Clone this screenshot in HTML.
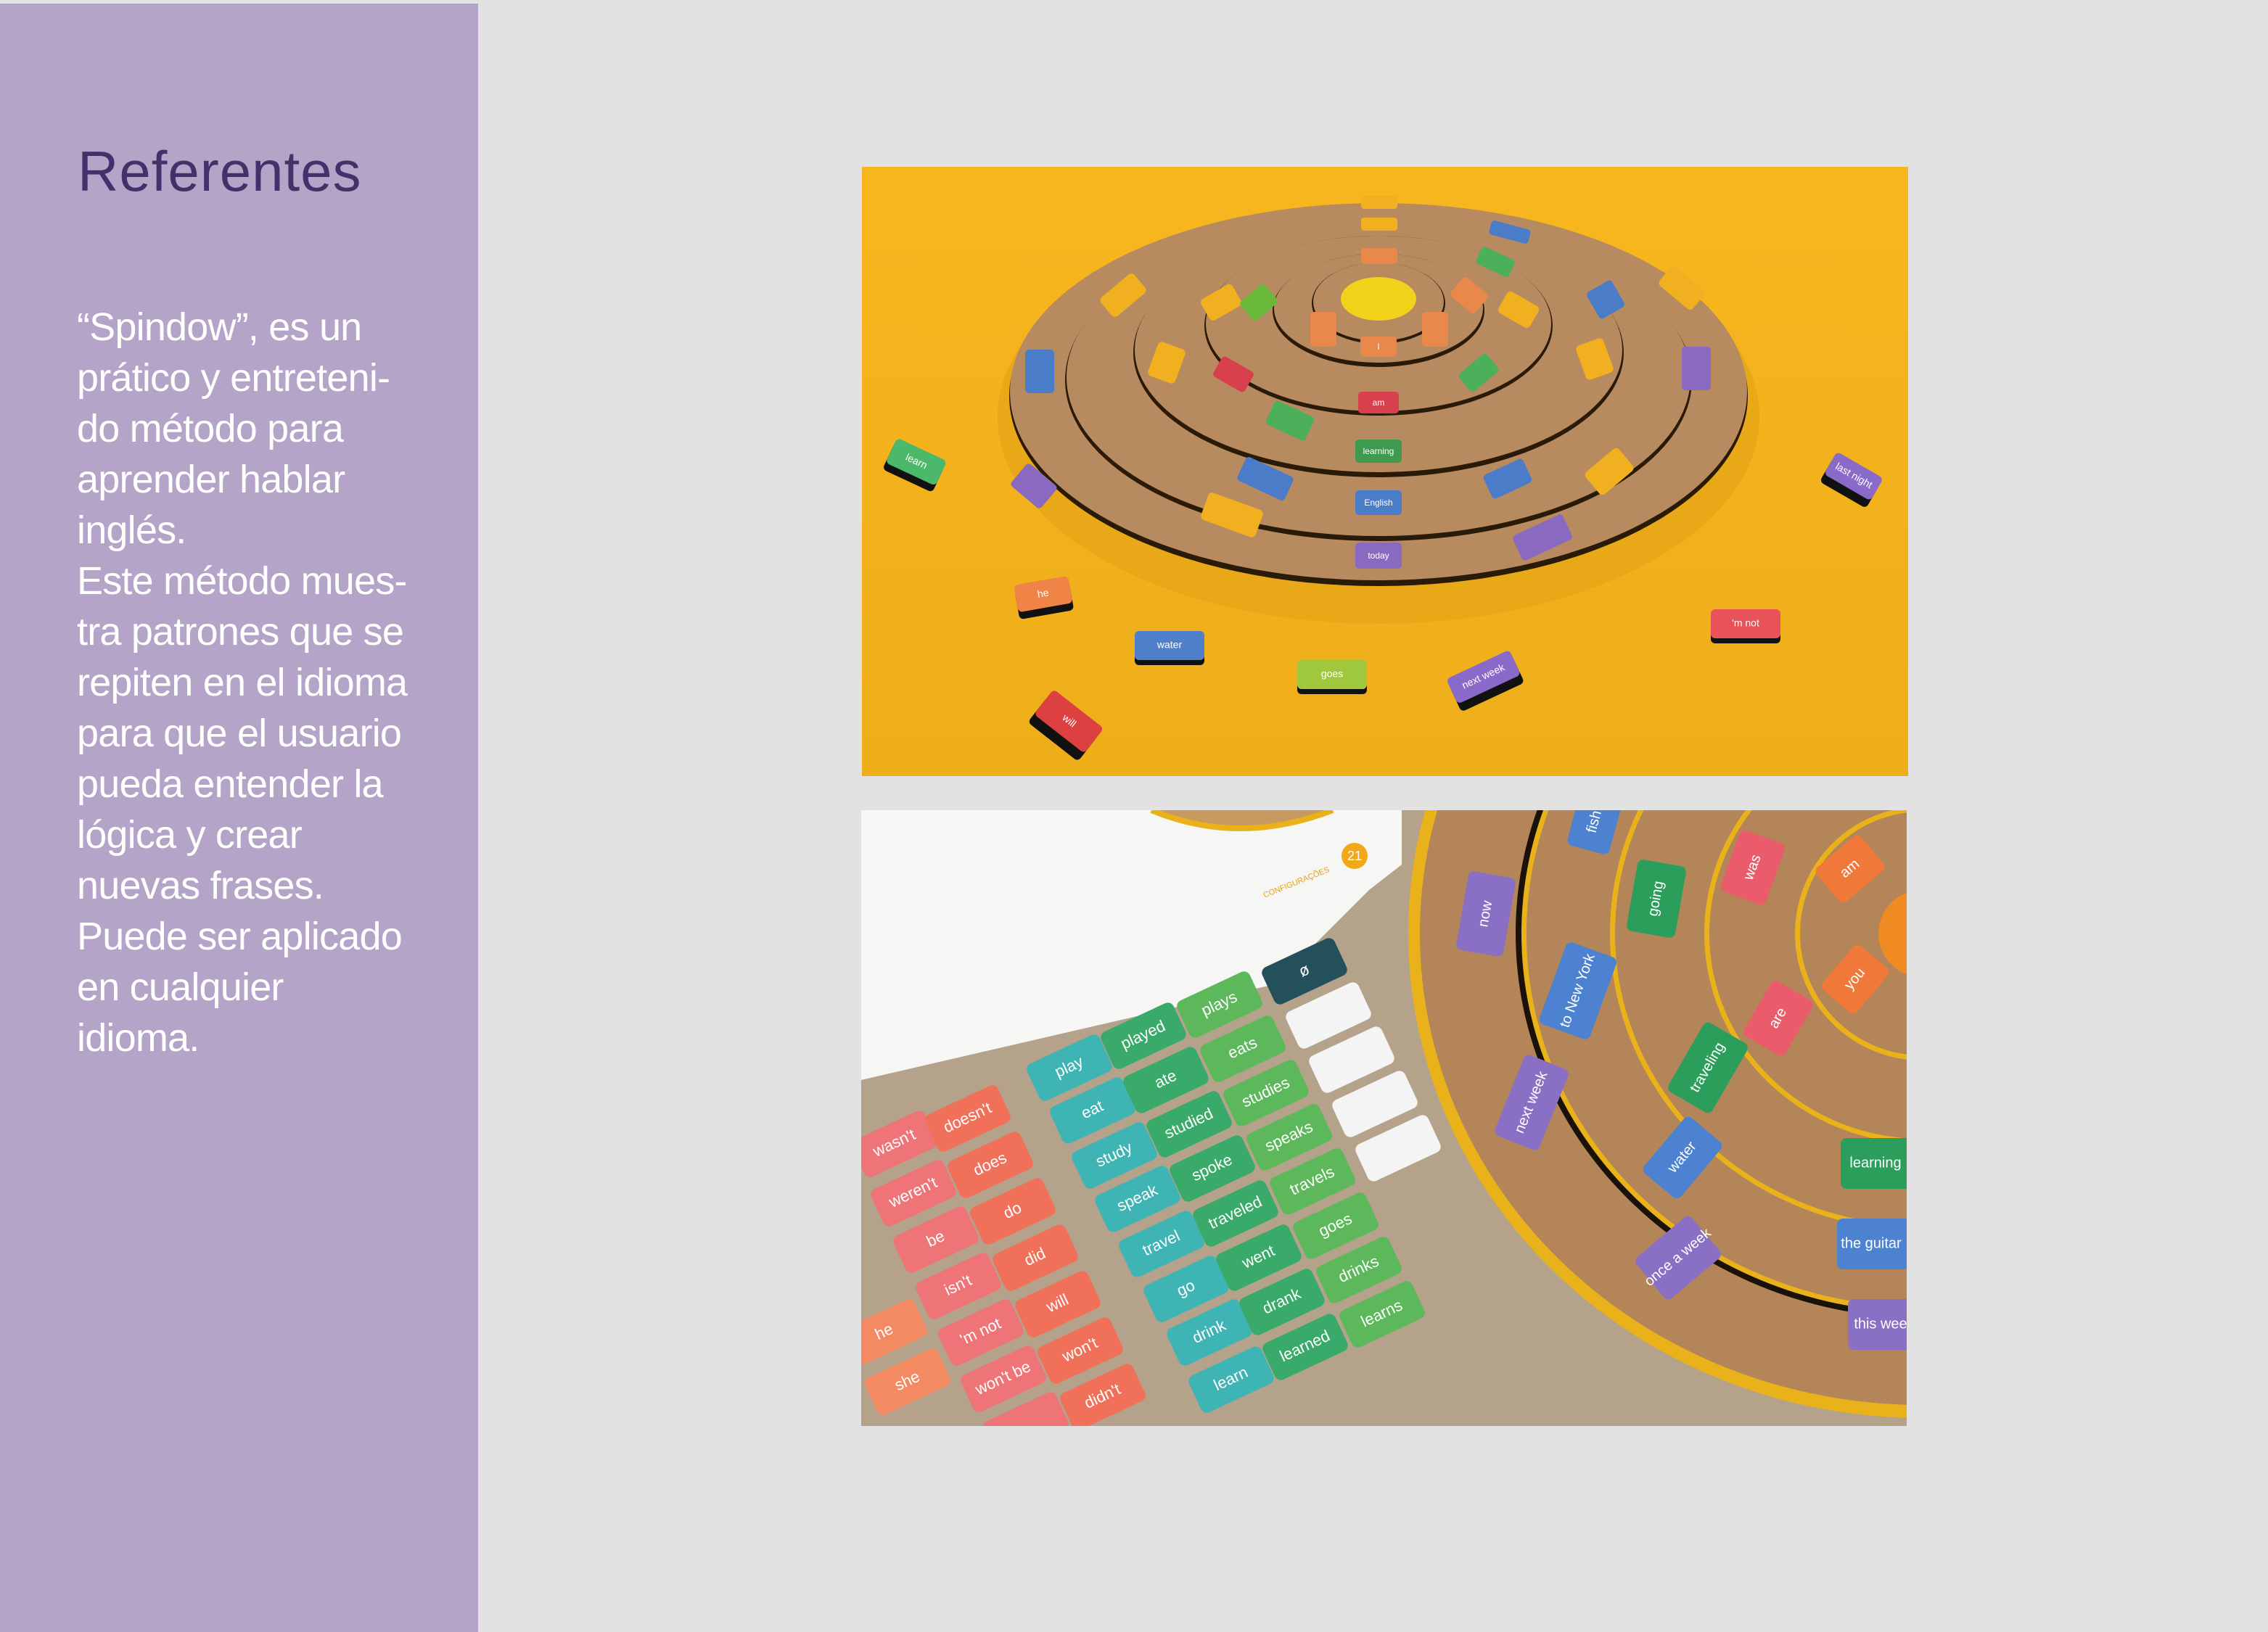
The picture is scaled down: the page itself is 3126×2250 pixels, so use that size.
<!DOCTYPE html>
<html><head><meta charset="utf-8"><style>
html,body{margin:0;padding:0}
body{width:3126px;height:2250px;background:#e2e2e2;position:relative;overflow:hidden;font-family:"Liberation Sans",sans-serif}
#side{position:absolute;left:0;top:5px;width:659px;height:2245px;background:#b4a4c8}
#title{position:absolute;left:107px;top:186px;font-size:78px;line-height:100px;color:#44306a;letter-spacing:1px}
#body{position:absolute;left:106px;top:416px;font-size:54px;line-height:70px;color:#fff;white-space:pre;letter-spacing:-0.8px}
svg{position:absolute;display:block}
svg text{font-family:"Liberation Sans",sans-serif;fill:#fff;text-anchor:middle;dominant-baseline:middle}
</style></head><body>
<div id="side"></div>
<div id="title">Referentes</div>
<div id="body">“Spindow”, es un
prático y entreteni-
do método para
aprender hablar
inglés.
Este método mues-
tra patrones que se
repiten en el idioma
para que el usuario
pueda entender la
lógica y crear
nuevas frases.
Puede ser aplicado
en cualquier
idioma.</div>

<svg style="left:1188px;top:230px" width="1442" height="840" viewBox="0 0 1442 840">
<defs><linearGradient id="yb" x1="0" y1="0" x2="0" y2="1"><stop offset="0" stop-color="#f8b61e"/><stop offset="1" stop-color="#eeae1a"/></linearGradient></defs>
<rect width="1442" height="840" fill="url(#yb)"/>
<ellipse cx="712" cy="345" rx="525" ry="285" fill="#e8a818"/>
<ellipse cx="712" cy="318" rx="510" ry="264" fill="#e8a818"/>
<ellipse cx="712" cy="316" rx="509" ry="262" fill="#2a1a08"/>
<ellipse cx="712" cy="310" rx="508" ry="260" fill="#b88a60"/>
<ellipse cx="712" cy="294" rx="432" ry="222" fill="#2a1a08"/>
<ellipse cx="712" cy="290" rx="430" ry="219" fill="#b88a60"/>
<ellipse cx="712" cy="256" rx="338" ry="172" fill="#2a1a08"/>
<ellipse cx="712" cy="252" rx="336" ry="169" fill="#b88a60"/>
<ellipse cx="712" cy="219" rx="240" ry="124" fill="#2a1a08"/>
<ellipse cx="712" cy="216" rx="238" ry="121" fill="#b88a60"/>
<ellipse cx="712" cy="198" rx="146" ry="78" fill="#2a1a08"/>
<ellipse cx="712" cy="195" rx="144" ry="75" fill="#b88a60"/>
<ellipse cx="712" cy="188" rx="92" ry="56" fill="#2a1a08"/>
<ellipse cx="712" cy="186" rx="90" ry="54" fill="#b88a60"/>
<ellipse cx="712" cy="182" rx="52" ry="30" fill="#f2d21a"/>
<g fill="#f0b020">
<rect x="470" y="170" width="50" height="34" rx="6" transform="rotate(-30 495 187)"/>
<rect x="400" y="245" width="40" height="50" rx="6" transform="rotate(20 420 270)"/>
<rect x="880" y="180" width="50" height="34" rx="6" transform="rotate(30 905 197)"/>
<rect x="990" y="240" width="40" height="50" rx="6" transform="rotate(-20 1010 265)"/>
<rect x="1100" y="150" width="60" height="34" rx="6" transform="rotate(40 1130 167)"/>
<rect x="330" y="160" width="60" height="34" rx="6" transform="rotate(-40 360 177)"/>
<rect x="470" y="460" width="80" height="40" rx="6" transform="rotate(20 510 480)"/>
<rect x="1000" y="400" width="60" height="40" rx="6" transform="rotate(-40 1030 420)"/>
<rect x="688" y="70" width="50" height="18" rx="4"/><rect x="688" y="40" width="50" height="18" rx="4"/>
</g>
<g font-size="12">
<rect x="687" y="234" width="50" height="28" rx="5" fill="#e8884a"/><text x="712" y="249">I</text>
<rect x="684" y="310" width="56" height="30" rx="5" fill="#d8404e"/><text x="712" y="326">am</text>
<rect x="680" y="376" width="64" height="32" rx="5" fill="#3e9a4e"/><text x="712" y="393">learning</text>
<rect x="680" y="446" width="64" height="34" rx="5" fill="#4a7cc8"/><text x="712" y="464">English</text>
<rect x="680" y="518" width="64" height="36" rx="5" fill="#8a6ac0"/><text x="712" y="537">today</text>
<rect x="618" y="200" width="36" height="48" rx="5" fill="#e8884a"/><rect x="772" y="200" width="36" height="48" rx="5" fill="#e8884a"/>
<rect x="688" y="112" width="50" height="22" rx="4" fill="#e8884a"/>
<rect x="225" y="252" width="40" height="60" rx="5" fill="#4a7cc8"/>
<rect x="1130" y="248" width="40" height="60" rx="5" fill="#8a6ac0"/>
<rect x="560" y="332" width="60" height="36" rx="5" fill="#4caf5a" transform="rotate(25 590 350)"/>
<rect x="520" y="412" width="72" height="36" rx="5" fill="#4a7cc8" transform="rotate(25 556 430)"/>
<rect x="860" y="412" width="60" height="36" rx="5" fill="#4a7cc8" transform="rotate(-25 890 430)"/>
<rect x="900" y="492" width="76" height="38" rx="5" fill="#8a6ac0" transform="rotate(-25 938 511)"/>
<rect x="210" y="420" width="54" height="40" rx="5" fill="#8a6ac0" transform="rotate(40 237 440)"/>
<rect x="487" y="270" width="50" height="32" rx="5" fill="#d8404e" transform="rotate(30 512 286)"/>
<rect x="825" y="268" width="50" height="32" rx="5" fill="#4caf5a" transform="rotate(-40 850 284)"/>
<rect x="525" y="170" width="44" height="34" rx="5" fill="#6ab83a" transform="rotate(-40 547 187)"/>
<rect x="815" y="160" width="44" height="34" rx="5" fill="#e8884a" transform="rotate(40 837 177)"/>
<rect x="848" y="118" width="50" height="26" rx="5" fill="#4caf5a" transform="rotate(25 873 131)"/>
<rect x="1005" y="162" width="40" height="42" rx="5" fill="#4a7cc8" transform="rotate(-30 1025 183)"/>
<rect x="865" y="80" width="56" height="20" rx="5" fill="#4a7cc8" transform="rotate(15 893 90)"/>
</g>
<g font-size="14">
<g transform="rotate(25 70 410)"><rect x="35" y="394" width="76" height="40" rx="6" fill="#111"/><rect x="35" y="386" width="76" height="38" rx="6" fill="#4cb86a"/><text x="73" y="405">learn</text></g>
<g transform="rotate(30 1366 426)"><rect x="1330" y="418" width="74" height="38" rx="6" fill="#111"/><rect x="1330" y="408" width="74" height="36" rx="6" fill="#8a6ac8"/><text x="1367" y="426">last night</text></g>
<g transform="rotate(-10 250 590)"><rect x="212" y="580" width="76" height="38" rx="6" fill="#111"/><rect x="212" y="570" width="76" height="38" rx="6" fill="#ef8446"/><text x="250" y="589">he</text></g>
<rect x="376" y="655" width="96" height="32" rx="6" fill="#111"/><rect x="376" y="640" width="96" height="40" rx="6" fill="#5080cc"/><text x="424" y="660">water</text>
<rect x="600" y="695" width="96" height="32" rx="6" fill="#111"/><rect x="600" y="680" width="96" height="40" rx="6" fill="#a0c83c"/><text x="648" y="700">goes</text>
<g transform="rotate(-25 858 706)"><rect x="810" y="696" width="96" height="38" rx="6" fill="#111"/><rect x="810" y="684" width="96" height="38" rx="6" fill="#8a6ac8"/><text x="858" y="703">next week</text></g>
<rect x="1170" y="625" width="96" height="32" rx="6" fill="#111"/><rect x="1170" y="610" width="96" height="40" rx="6" fill="#e85258"/><text x="1218" y="630">'m not</text>
<g transform="rotate(38 284 766)"><rect x="240" y="756" width="88" height="44" rx="6" fill="#111"/><rect x="240" y="742" width="88" height="44" rx="6" fill="#dc4040"/><text x="284" y="764">will</text></g>
</g>
</svg>

<svg style="left:1187px;top:1117px" width="1441" height="849" viewBox="0 0 1441 849">
<rect width="1441" height="849" fill="#b4a28a"/>
<ellipse cx="1462" cy="170" rx="708" ry="668" fill="#eab21a"/>
<ellipse cx="1462" cy="170" rx="692" ry="650" fill="#b48558"/>
<ellipse cx="1462" cy="170" rx="560" ry="530" fill="#1a1208"/>
<ellipse cx="1462" cy="170" rx="552" ry="522" fill="#eab21a"/>
<ellipse cx="1462" cy="170" rx="545" ry="515" fill="#b48558"/>
<ellipse cx="1462" cy="170" rx="430" ry="410" fill="#eab21a"/>
<ellipse cx="1462" cy="170" rx="423" ry="403" fill="#b48558"/>
<ellipse cx="1462" cy="170" rx="300" ry="290" fill="#eab21a"/>
<ellipse cx="1462" cy="170" rx="293" ry="283" fill="#b48558"/>
<ellipse cx="1462" cy="170" rx="175" ry="175" fill="#eab21a"/>
<ellipse cx="1462" cy="170" rx="168" ry="168" fill="#b48558"/>
<circle cx="1462" cy="170" r="60" fill="#f08a22"/>
<polygon points="0,0 745,0 745,75 700,110 570,240 0,372" fill="#f6f6f4"/>
<path d="M400 0 Q520 50 650 0" stroke="#eab21a" stroke-width="8" fill="#c89a60"/>
<circle cx="680" cy="63" r="18" fill="#f2a818"/><text x="680" y="64" font-size="18">21</text>
<text x="600" y="100" font-size="11" style="fill:#e8a010" transform="rotate(-22 600 100)">CONFIGURAÇÕES</text>
<g font-size="20">
<g transform="rotate(-80 861 143)"><rect x="806" y="110" width="110" height="66" rx="8" fill="#8a70c4"/><text x="861" y="143">now</text></g>
<g transform="rotate(-70 988 249)"><rect x="928" y="212" width="120" height="74" rx="8" fill="#4c82d0"/><text x="988" y="249">to New York</text></g>
<g transform="rotate(-68 924 403)"><rect x="864" y="370" width="120" height="66" rx="8" fill="#8a70c4"/><text x="924" y="403">next week</text></g>
<g transform="rotate(-80 1096 122)"><rect x="1046" y="88" width="100" height="68" rx="8" fill="#2c9e5c"/><text x="1096" y="122">going</text></g>
<g transform="rotate(-60 1167 355)"><rect x="1112" y="320" width="110" height="70" rx="8" fill="#2c9e5c"/><text x="1167" y="355">traveling</text></g>
<g transform="rotate(-50 1132 479)"><rect x="1082" y="446" width="100" height="66" rx="8" fill="#4c82d0"/><text x="1132" y="479">water</text></g>
<g transform="rotate(-40 1126 617)"><rect x="1076" y="580" width="100" height="74" rx="8" fill="#8a70c4"/><text x="1126" y="617">once a week</text></g>
<g transform="rotate(-70 1229 79)"><rect x="1184" y="46" width="90" height="66" rx="8" fill="#ea5c6c"/><text x="1229" y="79">was</text></g>
<g transform="rotate(-60 1264 287)"><rect x="1220" y="254" width="88" height="66" rx="8" fill="#ea5c6c"/><text x="1264" y="287">are</text></g>
<g transform="rotate(-40 1363 81)"><rect x="1323" y="50" width="80" height="62" rx="8" fill="#f07838"/><text x="1363" y="81">am</text></g>
<g transform="rotate(-50 1370 233)"><rect x="1330" y="202" width="80" height="62" rx="8" fill="#f07838"/><text x="1370" y="233">you</text></g>
<rect x="1350" y="452" width="100" height="70" rx="8" fill="#2c9e5c"/><text x="1398" y="487">learning</text>
<rect x="1345" y="563" width="100" height="70" rx="8" fill="#4c82d0"/><text x="1392" y="598">the guitar</text>
<rect x="1360" y="674" width="90" height="70" rx="8" fill="#8a70c4"/><text x="1405" y="709">this wee</text>
<g transform="rotate(-75 1011 16)"><rect x="971" y="-14" width="80" height="60" rx="8" fill="#4c82d0"/><text x="1011" y="16">fish</text></g>
</g>
<g font-size="22">
<g fill="#3fb4b4">
<g transform="rotate(-25 287 355)"><rect x="232" y="327" width="110" height="56" rx="9"/><text x="287" y="355">play</text></g>
<g transform="rotate(-25 319 414)"><rect x="264" y="386" width="110" height="56" rx="9"/><text x="319" y="414">eat</text></g>
<g transform="rotate(-25 349 476)"><rect x="294" y="448" width="110" height="56" rx="9"/><text x="349" y="476">study</text></g>
<g transform="rotate(-25 381 536)"><rect x="326" y="508" width="110" height="56" rx="9"/><text x="381" y="536">speak</text></g>
<g transform="rotate(-25 414 598)"><rect x="359" y="570" width="110" height="56" rx="9"/><text x="414" y="598">travel</text></g>
<g transform="rotate(-25 448 660)"><rect x="393" y="632" width="110" height="56" rx="9"/><text x="448" y="660">go</text></g>
<g transform="rotate(-25 480 720)"><rect x="425" y="692" width="110" height="56" rx="9"/><text x="480" y="720">drink</text></g>
<g transform="rotate(-25 510 785)"><rect x="455" y="757" width="110" height="56" rx="9"/><text x="510" y="785">learn</text></g>
</g>
<g fill="#3aaa6a">
<g transform="rotate(-25 389 311)"><rect x="334" y="283" width="110" height="56" rx="9"/><text x="389" y="311">played</text></g>
<g transform="rotate(-25 420 372)"><rect x="365" y="344" width="110" height="56" rx="9"/><text x="420" y="372">ate</text></g>
<g transform="rotate(-25 452 433)"><rect x="397" y="405" width="110" height="56" rx="9"/><text x="452" y="433">studied</text></g>
<g transform="rotate(-25 484 494)"><rect x="429" y="466" width="110" height="56" rx="9"/><text x="484" y="494">spoke</text></g>
<g transform="rotate(-25 516 556)"><rect x="461" y="528" width="110" height="56" rx="9"/><text x="516" y="556">traveled</text></g>
<g transform="rotate(-25 548 617)"><rect x="493" y="589" width="110" height="56" rx="9"/><text x="548" y="617">went</text></g>
<g transform="rotate(-25 580 678)"><rect x="525" y="650" width="110" height="56" rx="9"/><text x="580" y="678">drank</text></g>
<g transform="rotate(-25 612 740)"><rect x="557" y="712" width="110" height="56" rx="9"/><text x="612" y="740">learned</text></g>
</g>
<g fill="#5cb85a">
<g transform="rotate(-25 494 268)"><rect x="439" y="240" width="110" height="56" rx="9"/><text x="494" y="268">plays</text></g>
<g transform="rotate(-25 526 329)"><rect x="471" y="301" width="110" height="56" rx="9"/><text x="526" y="329">eats</text></g>
<g transform="rotate(-25 558 390)"><rect x="503" y="362" width="110" height="56" rx="9"/><text x="558" y="390">studies</text></g>
<g transform="rotate(-25 590 451)"><rect x="535" y="423" width="110" height="56" rx="9"/><text x="590" y="451">speaks</text></g>
<g transform="rotate(-25 622 512)"><rect x="567" y="484" width="110" height="56" rx="9"/><text x="622" y="512">travels</text></g>
<g transform="rotate(-25 654 573)"><rect x="599" y="545" width="110" height="56" rx="9"/><text x="654" y="573">goes</text></g>
<g transform="rotate(-25 686 634)"><rect x="631" y="606" width="110" height="56" rx="9"/><text x="686" y="634">drinks</text></g>
<g transform="rotate(-25 718 695)"><rect x="663" y="667" width="110" height="56" rx="9"/><text x="718" y="695">learns</text></g>
</g>
<g transform="rotate(-25 611 222)"><rect x="556" y="194" width="110" height="56" rx="9" fill="#24505c"/><text x="611" y="222">ø</text></g>
<g fill="#f4f4f4">
<rect x="589" y="255" width="110" height="56" rx="9" transform="rotate(-25 644 283)"/>
<rect x="621" y="316" width="110" height="56" rx="9" transform="rotate(-25 676 344)"/>
<rect x="653" y="377" width="110" height="56" rx="9" transform="rotate(-25 708 405)"/>
<rect x="685" y="438" width="110" height="56" rx="9" transform="rotate(-25 740 466)"/>
</g>
<g fill="#ee7478">
<g transform="rotate(-25 46 460)"><rect x="-9" y="432" width="110" height="56" rx="9"/><text x="46" y="460">wasn't</text></g>
<g transform="rotate(-25 72 528)"><rect x="17" y="500" width="110" height="56" rx="9"/><text x="72" y="528">weren't</text></g>
<g transform="rotate(-25 103 592)"><rect x="48" y="564" width="110" height="56" rx="9"/><text x="103" y="592">be</text></g>
<g transform="rotate(-25 134 656)"><rect x="79" y="628" width="110" height="56" rx="9"/><text x="134" y="656">isn't</text></g>
<g transform="rotate(-25 165 720)"><rect x="110" y="692" width="110" height="56" rx="9"/><text x="165" y="720">'m not</text></g>
<g transform="rotate(-25 196 784)"><rect x="141" y="756" width="110" height="56" rx="9"/><text x="196" y="784">won't be</text></g>
<rect x="172" y="820" width="110" height="56" rx="9" transform="rotate(-25 227 848)"/>
</g>
<g fill="#f0705a">
<g transform="rotate(-25 147 425)"><rect x="92" y="397" width="110" height="56" rx="9"/><text x="147" y="425">doesn't</text></g>
<g transform="rotate(-25 178 489)"><rect x="123" y="461" width="110" height="56" rx="9"/><text x="178" y="489">does</text></g>
<g transform="rotate(-25 209 553)"><rect x="154" y="525" width="110" height="56" rx="9"/><text x="209" y="553">do</text></g>
<g transform="rotate(-25 240 617)"><rect x="185" y="589" width="110" height="56" rx="9"/><text x="240" y="617">did</text></g>
<g transform="rotate(-25 271 681)"><rect x="216" y="653" width="110" height="56" rx="9"/><text x="271" y="681">will</text></g>
<g transform="rotate(-25 302 745)"><rect x="247" y="717" width="110" height="56" rx="9"/><text x="302" y="745">won't</text></g>
<g transform="rotate(-25 333 809)"><rect x="278" y="781" width="110" height="56" rx="9"/><text x="333" y="809">didn't</text></g>
</g>
<g fill="#f48a62">
<g transform="rotate(-25 32 720)"><rect x="-23" y="692" width="110" height="56" rx="9"/><text x="32" y="720">he</text></g>
<g transform="rotate(-25 64 788)"><rect x="9" y="760" width="110" height="56" rx="9"/><text x="64" y="788">she</text></g>
</g>
</g>
</svg>
</body></html>
